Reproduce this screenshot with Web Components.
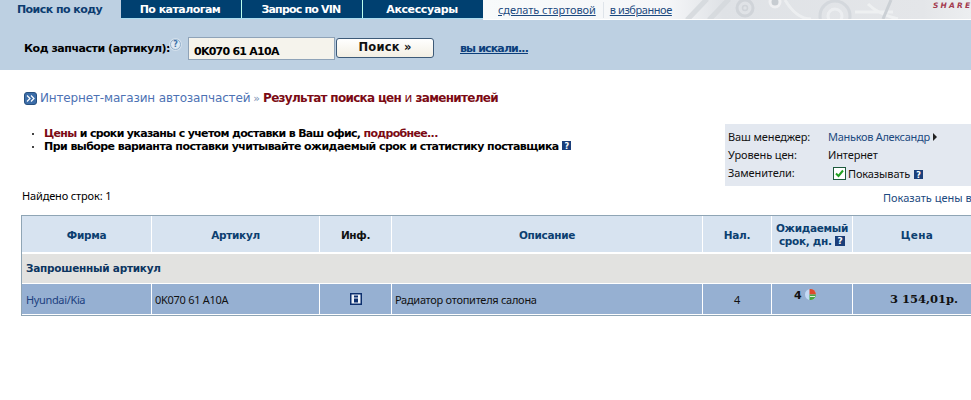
<!DOCTYPE html>
<html lang="ru"><head><meta charset="utf-8"><title>Результат поиска</title>
<style>
html,body{margin:0;padding:0;background:#fff;overflow:hidden}
body{width:971px;height:400px;font:11px "DejaVu Sans",sans-serif;color:#000}
</style></head><body>
<app-page></app-page>
<script>
const F='"DejaVu Sans",sans-serif';
const N='"Noto Sans","DejaVu Sans",sans-serif';
const Q=(s=10,bg='#1b3f7a')=>`<svg width="${s}" height="${s}" viewBox="0 0 10 10" style="vertical-align:-1px"><rect width="10" height="10" fill="${bg}"/><text x="5" y="8.4" font-size="9" font-weight="700" text-anchor="middle" fill="#fff" font-family="DejaVu Sans">?</text></svg>`;
function def(name,html){customElements.define(name,class extends HTMLElement{constructor(){super();this.attachShadow({mode:'open'}).innerHTML=html}})}

def('app-tabs',`<style>
:host{display:flex;height:20px;background:#bdd0e2;font:700 11px ${F}}
.t{height:18px;box-sizing:border-box;padding-right:2px;background:#004070;color:#fff;border-left:1px solid #bfe;display:flex;align-items:center;justify-content:center;box-shadow:0 1px 0 #a9dcef;width:121px}
.a{height:19px;background:#bdd0e2;color:#0c3c70;border:0;letter-spacing:-.55px;box-shadow:none}
.t.n{border-left:0;width:120px}
.r{flex:1;display:flex;height:19px;position:relative;background:linear-gradient(90deg,#f8fafb 0,#f5f6f8 185px,#dfe2e6 240px,#e4e6e9 440px,#eceef0 488px);font:400 11px ${N};color:#1c4a80;align-items:center;padding-left:15px;overflow:hidden;border-bottom:1px solid #fff}
.r a{color:#1c4a80;text-decoration:underline;position:relative;z-index:1;letter-spacing:-.07px}
.r a.f{letter-spacing:-.42px}
.s{width:1px;height:16px;background:#dfe4ea;margin:0 6px 0 7px;position:relative;z-index:1}
svg{position:absolute;left:180px;top:0}
.sh{position:absolute;left:450px;top:0;font:italic 700 7.5px/11px ${F};color:#a33b50;letter-spacing:2.2px;white-space:nowrap}
</style>
<div class="t a">Поиск по коду</div><div class="t n" style="letter-spacing:-.53px">По каталогам</div><div class="t" style="letter-spacing:-.8px">Запрос по VIN</div><div class="t" style="letter-spacing:-.4px">Аксессуары</div>
<div class="r"><a>сделать стартовой</a><span class="s"></span><a class="f">в избранное</a>
<svg width="280" height="19" fill="none" stroke="#cfd3d8" stroke-width="3" opacity=".9"><path d="M24 20 44 -1M46 20 66 -1" stroke-width="5" stroke="#d6dade"/><circle cx="82" cy="8" r="8"/><circle cx="82" cy="8" r="2.5" stroke-width="1.5"/><circle cx="112" cy="2" r="5" stroke="#f1f2f4" fill="#c5cacf"/><circle cx="172" cy="16" r="15" stroke="#d3d7dc"/><circle cx="172" cy="16" r="7" stroke="#eef0f2"/><path d="M122 0c6 10 14 19 26 19" stroke="#eef0f2"/><path d="M205 4c8 8 18 12 30 15M192 12h38" stroke="#f0f2f3"/><path d="M228 0l-8 19" stroke="#c9ced3"/></svg>
<span class="sh">SHARE</span></div>`);

def('search-bar',`<style>
:host{display:flex;align-items:flex-start;height:50px;background:#bdd0e2;box-sizing:border-box;padding:17px 0 0 24px;font:700 11px ${F}}
.l{margin-top:5px;width:146px;letter-spacing:-.46px;white-space:nowrap}
.h{width:11px;height:11px;border-radius:50%;background:#dfe9f3;border:1px solid #93b0cc;box-shadow:0 0 0 1px #d4e0ec;box-sizing:border-box;color:#3f72a8;font:700 8px/9px ${F};text-align:center;margin:2px 7px 0 0}
.i{width:147px;height:23px;box-sizing:border-box;background:#f5f3ec;border:1px solid #8fa3b8;padding:7px 0 0 5px;letter-spacing:-.75px;line-height:14px}
.b{width:98px;height:20px;box-sizing:border-box;margin:1px 0 0 1px;border:1px solid #3d5a78;border-radius:3px;background:linear-gradient(#fff,#f3efe4);text-align:center;font-size:11.5px;line-height:17px;letter-spacing:.2px;color:#111}
a{margin:5px 0 0 26px;color:#0c3f7c;text-decoration:underline;letter-spacing:-.85px}
</style><div class="l">Код запчасти (артикул):</div><div class="h">?</div><div class="i">0K070 61 A10A</div><div class="b">Поиск »</div><a>вы искали...</a>`);

def('bread-crumb',`<style>
:host{display:flex;align-items:center;height:16px;margin:20px 0 0 24px;font:400 12px ${F};white-space:nowrap}
.ic{width:13px;height:13px;border-radius:3px;background:#3c6da8;border:1px solid #27507f;box-sizing:border-box;margin-right:3px;display:block}
.a{color:#4d72b4;letter-spacing:-.15px}.m{color:#7b93b5;margin:0 3px;font-size:11px}.r{color:#7b0a14;letter-spacing:-.35px}
.r b{letter-spacing:-.7px}
</style><svg class="ic" viewBox="0 0 11 11" fill="none" stroke="#fff" stroke-width="1.2"><path d="M2 2.5 5 5.5 2 8.5M6 2.5 9 5.5 6 8.5"/></svg><span class="a">Интернет-магазин автозапчастей</span><span class="m">»</span><span class="r"><b>Результат поиска цен</b> и <b>заменителей</b></span>`);

def('note-list',`<style>
:host{display:block;margin:21px 0 0 32px;font:700 11px/13px ${F};white-space:nowrap}
div{display:flex;align-items:center;height:13px}
i{width:2px;height:2px;background:#444;margin-right:10px;flex:none}
em{font-style:normal;color:#7b0a14}
span{margin-left:3px;display:inline-flex}
p{margin:0}
</style><div><i></i><p style="letter-spacing:-.67px"><em>Цены</em> и сроки указаны с учетом доставки в Ваш офис, <em>подробнее...</em></p></div>
<div><i></i><p style="letter-spacing:-.56px">При выборе варианта поставки учитывайте ожидаемый срок и статистику поставщика<span>${Q(9)}</span></p></div>`);

def('manager-panel',`<style>
:host{display:grid;grid-template-columns:100px 1fr;grid-auto-rows:18px;align-content:start;width:246px;height:62px;box-sizing:border-box;background:#e3e8f0;padding:4px 0 0 3px;font:400 11px/17px ${N};letter-spacing:-.12px;white-space:nowrap;color:#111}
a{color:#1c4a80;letter-spacing:-.3px}
.tri{display:inline-block;border-left:4px solid #222;border-top:4px solid transparent;border-bottom:4px solid transparent;margin-left:3px}
.c{display:flex;align-items:center;padding-left:5px}
.x{width:13px;height:13px;box-sizing:border-box;border:1px solid #1c5a3c;background:#fff;margin-right:2px;display:block}
</style><span>Ваш менеджер:</span><span><a>Маньков Александр</a><i class="tri"></i></span>
<span>Уровень цен:</span><span>Интернет</span>
<span>Заменители:</span><span class="c"><svg class="x" viewBox="0 0 11 11" fill="none" stroke="#21a121" stroke-width="2"><path d="M2 5.5 4.5 8 9 2.5"/></svg>Показывать<span style="margin-left:4px">${Q(9)}</span></span>`);

def('info-row',`<style>
:host{display:flex;justify-content:space-between;height:19px;font:400 11px/19px ${N};white-space:nowrap;overflow:hidden;padding-left:22px}
span{letter-spacing:-.15px}
a{color:#1c4a80;width:88px;overflow:hidden;padding-top:2px}
</style><span>Найдено строк: 1</span><a>Показать цены в</a>`);

def('result-table',`<style>
:host{display:block;margin:10px 0 0 21px;width:960px;box-sizing:border-box;border:1px solid #8fa5b5;border-right:0;background:#fff;font:400 11px ${N}}
.g{display:grid;grid-template-columns:129px 167px 71px 310px 68px 80px 1fr;column-gap:1px}
.h{height:36px;background:#fff;border-bottom:1px solid #fff;font:700 10.5px ${F}}
.h>div{display:flex;align-items:center;justify-content:center;text-align:center;color:#0c3f70;letter-spacing:-.3px;line-height:13px;background:#d7e3f0;padding-top:3px;box-sizing:border-box}
.h>.two{padding-top:1px}
.grp{height:29px;margin-top:1px;background:#e2e2e0;font:700 10.5px/29px ${F};color:#0c3560;padding-left:4px;letter-spacing:-.25px}
.r{height:30px;margin-top:1px;background:#fff;border-bottom:1px solid #fff}
.r>div{background:#96b0d2;display:flex;align-items:center;padding-left:3px;color:#111;white-space:nowrap;letter-spacing:-.28px}
.r>.fm{color:#1c4080;padding-left:4px;letter-spacing:-.35px}
.r>.ce{justify-content:center;padding:0}
.r>.dy{font:700 11px ${F};align-items:flex-start;justify-content:flex-start;padding:5px 0 0 22px;gap:3px;letter-spacing:0}
.dy svg{flex:none;display:block;width:11px;height:11px}
.r>.pr{font:700 11.5px 'DejaVu Serif',${F};color:#111;padding-left:14px;letter-spacing:0}
</style>
<div class="g h"><div>Фирма</div><div>Артикул</div><div style="color:#111">Инф.</div><div>Описание</div><div>Нал.</div><div class="two"><span>Ожидаемый<br>срок, дн. ${Q(10)}</span></div><div style="letter-spacing:.3px">Цена</div></div>
<div class="grp">Запрошенный артикул</div>
<div class="g r"><div class="fm">Hyundai/Kia</div><div>0K070 61 A10A</div><div class="ce"><svg width="12" height="12" viewBox="0 0 12 12"><rect width="12" height="12" fill="#0c2f6e"/><rect x="1.5" y="1.5" width="9" height="9" fill="#eef3fa"/><rect x="4" y="2.5" width="4" height="2" fill="#0c2f6e"/><rect x="4" y="5.5" width="4" height="4" fill="#0c2f6e"/></svg></div><div>Радиатор отопителя салона</div><div class="ce">4</div>
<div class="dy"><span>4</span><svg viewBox="0 0 11 11"><circle cx="5.5" cy="5.5" r="5.5" fill="#c4daf6"/><path d="M4.5 5.5V.1A5.5 5.5 0 0 1 11 5.5z" fill="#dc4a2c"/><path d="M4.5 5.5H11A5.5 5.5 0 0 1 4.5 10.9z" fill="#48a53e"/><path d="M5 7.5h5" stroke="#dff0da"/></svg></div>
<div class="ce pr">3 154,01р.</div></div>`);

def('app-page',`<style>
:host{display:block;width:971px;height:400px;overflow:hidden}
.mid{display:flex;justify-content:space-between;align-items:flex-start;height:80px}
manager-panel{margin-top:18px}
</style><app-tabs></app-tabs><search-bar></search-bar><bread-crumb></bread-crumb>
<div class="mid"><note-list></note-list><manager-panel></manager-panel></div>
<info-row></info-row><result-table></result-table>`);
</script></body></html>
